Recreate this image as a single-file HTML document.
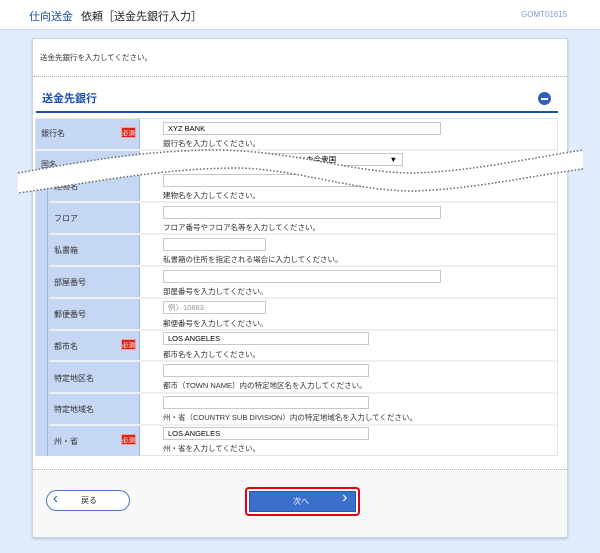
<!DOCTYPE html>
<html><head><meta charset="utf-8"><style>
*{margin:0;padding:0;box-sizing:border-box}
body{width:600px;height:553px;background:#e0ebfb;font-family:"Liberation Sans","Noto Sans CJK JP",sans-serif;position:relative;overflow:hidden;font-size:8px;color:#333}
.a{position:absolute}
.hdr{left:0;top:0;width:600px;height:30px;background:#fff;border-bottom:1px solid #d0dcf0}
.card{left:32px;top:38px;width:536px;height:500px;background:#fff;border:1px solid #c8d4e8;box-shadow:0 1px 2px #b8c4d8}
.lab{background:#c5d7f3}
.strip{background:#c5d7f3;border-right:1px solid #9eb6de}
.in{position:absolute;height:13px;background:#fff;border:1px solid #c8c8c8;font-size:7.5px;padding-left:4px;line-height:11px;color:#000}
.hint{position:absolute;font-size:7.5px;color:#333}
.req{position:absolute;left:121px;width:15px;height:11px;background:#d6231a;color:#fff;font-size:6.5px;line-height:11px;text-align:center;border:1px solid #f0a0a0;overflow:hidden}
.sep{position:absolute;left:41px;width:517px;height:2px;background:#eceff4}
</style></head><body>
<div class="a hdr"></div>
<div class="a" style="left:29px;top:8px;font-size:11px;color:#1a4fa8">仕向送金</div>
<div class="a" style="left:81px;top:8px;font-size:11px;color:#222">依頼［送金先銀行入力］</div>
<div class="a" style="left:521px;top:10px;font-size:8px;color:#7c9ad8">GOMT01615</div>
<div class="a card"></div>
<div class="a" style="left:40px;top:52px;font-size:7.5px">送金先銀行を入力してください。</div>
<div class="a" style="left:33px;top:76px;width:534px;border-top:1px dotted #aaa"></div>
<div class="a" style="left:42px;top:90px;font-size:11px;color:#1a4fa8;font-weight:bold">送金先銀行</div>
<div class="a" style="left:538px;top:92px;width:13px;height:13px;border-radius:50%;background:#2f5fb8"><div style="position:absolute;left:3px;top:5.5px;width:7px;height:2px;background:#fff"></div></div>
<div class="a" style="left:36px;top:111px;width:522px;height:2px;background:#1f4fae"></div>
<div class="a" style="left:35px;top:118px;width:523px;height:338px;background:#fff;border:1px solid #e0e4ea"></div>
<div class="a lab" style="left:36px;top:119px;width:103px;height:337px"></div>
<div class="a strip" style="left:36px;top:170px;width:12px;height:286px"></div>
<div class="a" style="left:139px;top:119px;width:1px;height:337px;background:#9eb6de"></div>
<div class="sep" style="top:149px;left:36px;width:522px"></div>
<div class="sep" style="top:201px;left:49px;width:509px"></div>
<div class="sep" style="top:233px;left:49px;width:509px"></div>
<div class="sep" style="top:265px;left:49px;width:509px"></div>
<div class="sep" style="top:297px;left:49px;width:509px"></div>
<div class="sep" style="top:329px;left:49px;width:509px"></div>
<div class="sep" style="top:360px;left:49px;width:509px"></div>
<div class="sep" style="top:392px;left:49px;width:509px"></div>
<div class="sep" style="top:424px;left:49px;width:509px"></div>
<div class="a" style="left:41px;top:128px">銀行名</div><div class="req" style="top:127px">必須</div>
<div class="in" style="left:163px;top:122px;width:278px">XYZ BANK</div><div class="hint" style="left:163px;top:138px">銀行名を入力してください。</div>
<div class="a" style="left:41px;top:159px">国名</div>
<div class="in" style="left:163px;top:153px;width:240px;padding-left:120px">アメリカ合衆国<span style="position:absolute;right:5px">▼</span></div>
<div class="a" style="left:54px;top:181px">建物名</div>
<div class="in" style="left:163px;top:174px;width:278px"></div><div class="hint" style="left:163px;top:190px">建物名を入力してください。</div>
<div class="a" style="left:54px;top:213px">フロア</div>
<div class="in" style="left:163px;top:206px;width:278px"></div><div class="hint" style="left:163px;top:222px">フロア番号やフロア名等を入力してください。</div>
<div class="a" style="left:54px;top:245px">私書箱</div>
<div class="in" style="left:163px;top:238px;width:103px"></div><div class="hint" style="left:163px;top:254px">私書箱の住所を指定される場合に入力してください。</div>
<div class="a" style="left:54px;top:277px">部屋番号</div>
<div class="in" style="left:163px;top:270px;width:278px"></div><div class="hint" style="left:163px;top:286px">部屋番号を入力してください。</div>
<div class="a" style="left:54px;top:309px">郵便番号</div>
<div class="in" style="left:163px;top:301px;width:103px;color:#999">例）10883</div><div class="hint" style="left:163px;top:318px">郵便番号を入力してください。</div>
<div class="a" style="left:54px;top:341px">都市名</div><div class="req" style="top:339px">必須</div>
<div class="in" style="left:163px;top:332px;width:206px">LOS ANGELES</div><div class="hint" style="left:163px;top:349px">都市名を入力してください。</div>
<div class="a" style="left:54px;top:373px">特定地区名</div>
<div class="in" style="left:163px;top:364px;width:206px"></div><div class="hint" style="left:163px;top:380px">都市（TOWN NAME）内の特定地区名を入力してください。</div>
<div class="a" style="left:54px;top:404px">特定地域名</div>
<div class="in" style="left:163px;top:396px;width:206px"></div><div class="hint" style="left:163px;top:412px">州・省（COUNTRY SUB DIVISION）内の特定地域名を入力してください。</div>
<div class="a" style="left:54px;top:436px">州・省</div><div class="req" style="top:434px">必須</div>
<div class="in" style="left:163px;top:427px;width:206px">LOS ANGELES</div><div class="hint" style="left:163px;top:443px">州・省を入力してください。</div>
<svg class="a" style="left:0;top:0" width="600" height="553">
<path d="M18 173 C90 160 150 150 220 150 C300 152 350 172 410 173 C470 172 530 158 583 150 L583 169 C530 176 470 190 410 191 C350 190 300 170 240 168 C160 168 90 183 18 193 Z" fill="#fff"/>
<path d="M18 173 C90 160 150 150 220 150 C300 152 350 172 410 173 C470 172 530 158 583 150" fill="none" stroke="#666" stroke-width="1.5" stroke-dasharray="1.5 2"/>
<path d="M583 169 C530 176 470 190 410 191 C350 190 300 170 240 168 C160 168 90 183 18 193" fill="none" stroke="#666" stroke-width="1.5" stroke-dasharray="1.5 2"/>
</svg>
<div class="a" style="left:33px;top:469px;width:534px;height:68px;background:#f8f8f8;border-top:1px dotted #bbb"></div>
<div class="a" style="left:46px;top:490px;width:84px;height:21px;border:1px solid #4a74c4;border-radius:11px;background:#fff"></div>
<div class="a" style="left:53px;top:490px;font-size:15px;color:#2a58b0">‹</div>
<div class="a" style="left:81px;top:495px;font-size:8px;color:#333">戻る</div>
<div class="a" style="left:245px;top:487px;width:115px;height:29px;border:2px solid #e30016;border-radius:4px;background:#fff"></div>
<div class="a" style="left:249px;top:491px;width:107px;height:21px;background:#3a6fcc;border:1px solid #2a58b0"></div>
<div class="a" style="left:293px;top:496px;font-size:8px;color:#fff">次へ</div>
<div class="a" style="left:342px;top:489px;font-size:16px;color:#fff">›</div>
</body></html>
